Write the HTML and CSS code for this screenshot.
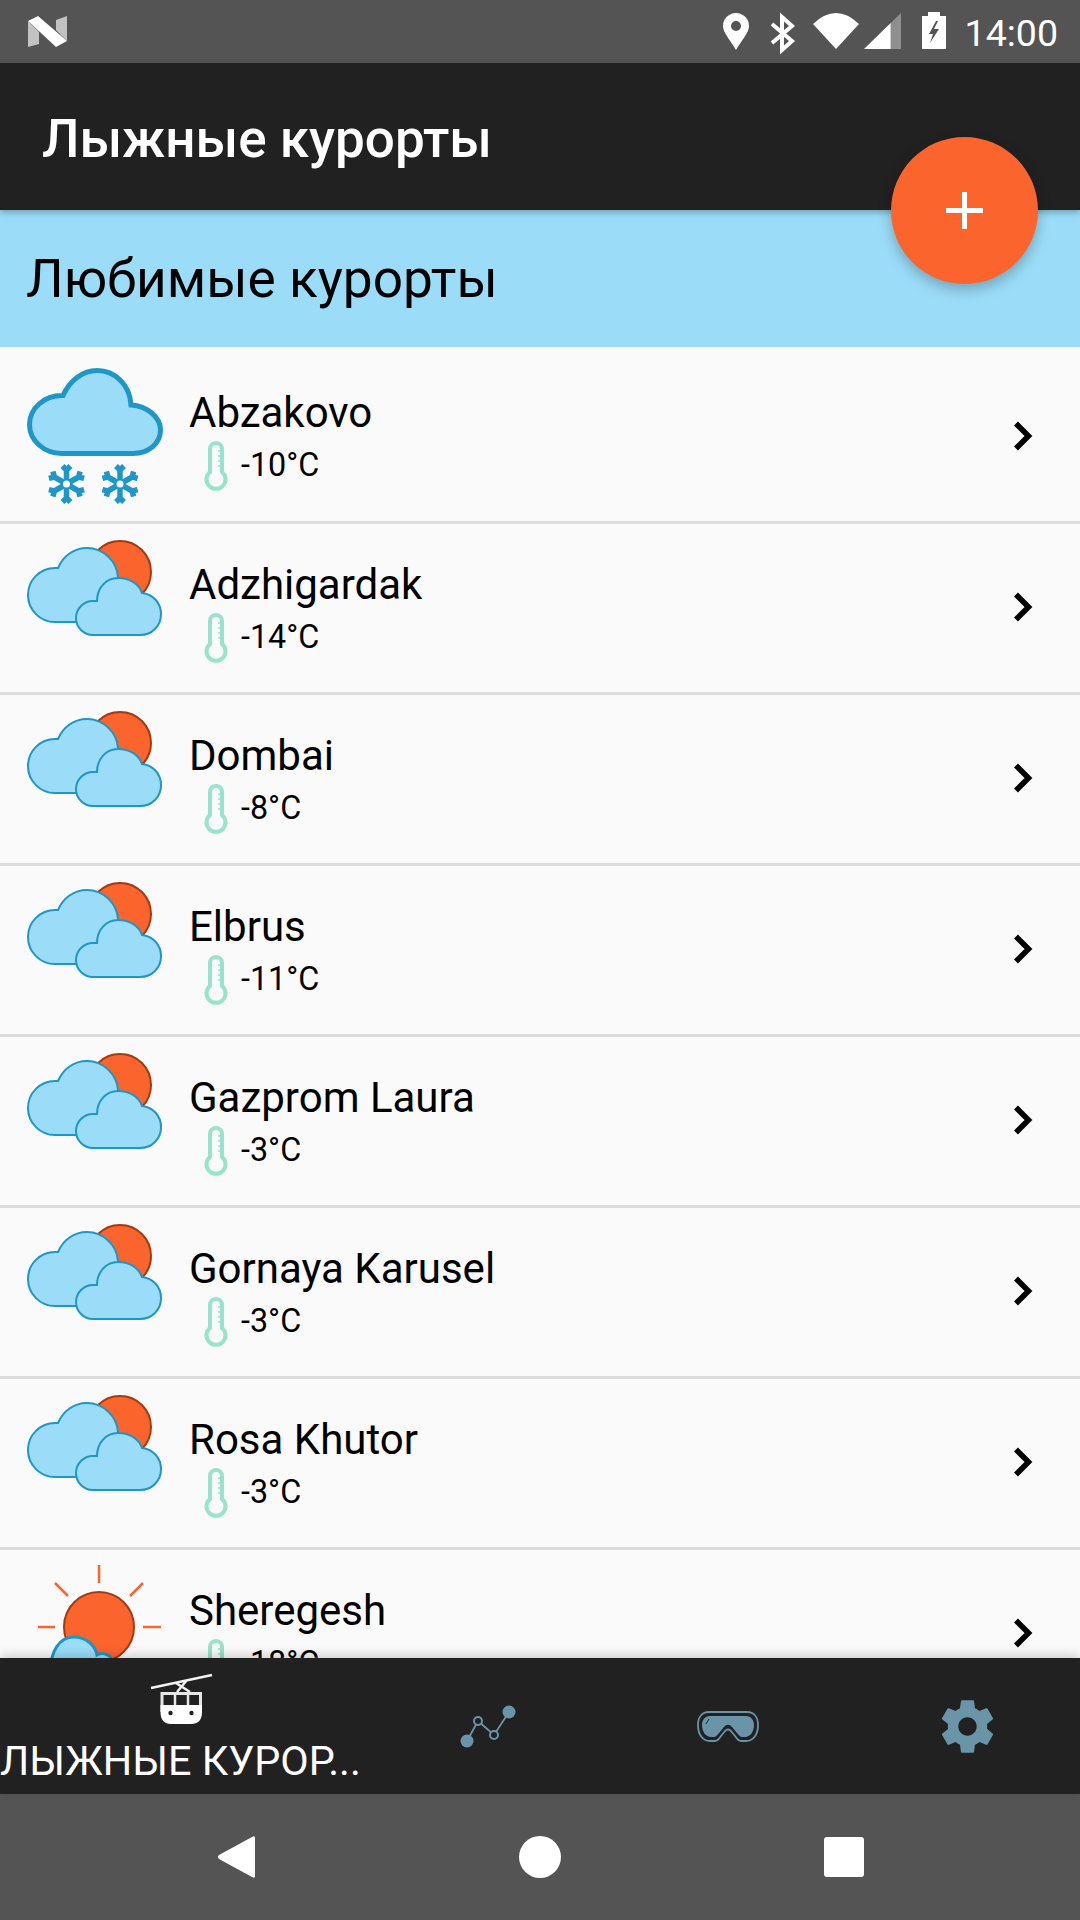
FILE: index.html
```html
<!DOCTYPE html>
<html lang="ru">
<head>
<meta charset="utf-8">
<title>Лыжные курорты</title>
<link rel="stylesheet" href="styles.css">
</head>
<body>
<svg class="defs" width="0" height="0" aria-hidden="true">
  <defs>
    <g id="flake">
      <g id="arm">
        <path d="M0-15V15M-4-18L0-14L4-18M-4 18L0 14L4 18"/>
      </g>
      <use href="#arm" transform="rotate(60)"/>
      <use href="#arm" transform="rotate(120)"/>
    </g>
    <symbol id="cloudy" viewBox="0 0 165 168">
      <circle class="sun" cx="120" cy="48" r="31"/>
      <path class="cloud" d="M55 98A27 27 0 0 1 55 44H58C63 32 74 24 87 24C103 24 117 37 118 53V98Z"/>
      <path class="cloud" d="M93 111A17 17 0 0 1 93 77H97C97 64 106 54 118 54C130 54 139 60 142 69C153 70 161 79 161 90C161 102 152 111 140 111Z"/>
    </symbol>
    <symbol id="thermo" viewBox="0 0 52 52">
      <path class="thermo-line" d="M21 33V10A6 6 0 0 1 33 10V33A9.500 9.500 0 1 1 21 33Z"/>
      <path class="thermo-tick" d="M29 12H33M29 17H33M29 22H33M29 27H33"/>
    </symbol>
    <symbol id="chevron" viewBox="0 0 30 40">
      <path d="M5 7.500L17.500 20L5 32.500" class="chevron-line"/>
    </symbol>
  </defs>
</svg>
<div class="screen">
  <header class="status">
    <svg class="n-logo" viewBox="28 16 39 31">
      <path class="n-side" d="M28 21L39 32V44L28 47ZM56 20L67 16V41L56 30Z"/>
      <path class="n-main" d="M28 21L38 16L67 41L56 47Z"/>
    </svg>
    <div class="status-right">
      <svg class="status-icons" viewBox="720 0 230 63">
        <path class="s-fill" fill-rule="evenodd" d="M736 50C731 41 723 33 723 26A13 13 0 0 1 749 26C749 33 741 41 736 50ZM736 21A5 5 0 1 0 736 31A5 5 0 1 0 736 21Z"/>
        <path class="s-line" d="M772 24L792 41L782 50V17L792 26L772 43"/>
        <path class="s-fill" d="M836 49L813 24Q836 2 859 24Z"/>
        <path class="s-fill" d="M864 49H890.700V23Z"/>
        <path class="s-dim" d="M890.700 49H901V13L890.700 23Z"/>
        <path class="s-fill" d="M928 16V12H940V16H946V49H922V16Z"/>
        <path class="s-cut" d="M936 21L929 34H933L930 43L939 29H934L938 21Z"/>
      </svg>
      <span class="clock">14:00</span>
    </div>
  </header>

  <div class="appbar"><h1 class="app-title">Лыжные курорты</h1></div>
  <div class="section-head"><h2 class="section-title">Любимые курорты</h2></div>

  <main class="list">
    <div class="row row-first">
      <svg class="weather weather-snow" viewBox="0 0 165 174">
        <path class="cloud-thick" d="M62 106.500A32.500 29 0 0 1 62 48.500H63C70 33 83 23.500 97 23.500C115 23.500 130 38 131 58C147 59 160.500 70 160.500 83C160.500 96 149 106.500 133 106.500Z"/>
        <use class="flake" href="#flake" x="66.500" y="137"/>
        <use class="flake" href="#flake" x="120" y="137"/>
        <circle class="flake-eye" cx="66.500" cy="137" r="3.500"/>
        <circle class="flake-eye" cx="120" cy="137" r="3.500"/>
      </svg>
      <div class="info">
        <div class="name">Abzakovo</div>
        <div class="temp"><svg class="thermo"><use href="#thermo"/></svg><span>-10°C</span></div>
      </div>
      <svg class="chevron"><use href="#chevron"/></svg>
    </div>
    <div class="row">
      <svg class="weather"><use href="#cloudy"/></svg>
      <div class="info"><div class="name">Adzhigardak</div><div class="temp"><svg class="thermo"><use href="#thermo"/></svg><span>-14°C</span></div></div>
      <svg class="chevron"><use href="#chevron"/></svg>
    </div>
    <div class="row">
      <svg class="weather"><use href="#cloudy"/></svg>
      <div class="info"><div class="name">Dombai</div><div class="temp"><svg class="thermo"><use href="#thermo"/></svg><span>-8°C</span></div></div>
      <svg class="chevron"><use href="#chevron"/></svg>
    </div>
    <div class="row">
      <svg class="weather"><use href="#cloudy"/></svg>
      <div class="info"><div class="name">Elbrus</div><div class="temp"><svg class="thermo"><use href="#thermo"/></svg><span>-11°C</span></div></div>
      <svg class="chevron"><use href="#chevron"/></svg>
    </div>
    <div class="row">
      <svg class="weather"><use href="#cloudy"/></svg>
      <div class="info"><div class="name">Gazprom Laura</div><div class="temp"><svg class="thermo"><use href="#thermo"/></svg><span>-3°C</span></div></div>
      <svg class="chevron"><use href="#chevron"/></svg>
    </div>
    <div class="row">
      <svg class="weather"><use href="#cloudy"/></svg>
      <div class="info"><div class="name">Gornaya Karusel</div><div class="temp"><svg class="thermo"><use href="#thermo"/></svg><span>-3°C</span></div></div>
      <svg class="chevron"><use href="#chevron"/></svg>
    </div>
    <div class="row">
      <svg class="weather"><use href="#cloudy"/></svg>
      <div class="info"><div class="name">Rosa Khutor</div><div class="temp"><svg class="thermo"><use href="#thermo"/></svg><span>-3°C</span></div></div>
      <svg class="chevron"><use href="#chevron"/></svg>
    </div>
    <div class="row">
      <svg class="weather" viewBox="0 0 165 168">
        <path class="ray" d="M99 15V33M55 33L68 46M143 33L130 46M38 77H55M143 77H161"/>
        <circle class="sun" cx="99" cy="77" r="35"/>
        <path class="cloud-mid" d="M50 125C50 100 60 87 74 87C86 87 95 95 97 105C103 102 110 104 113 111V140H50Z"/>
      </svg>
      <div class="info"><div class="name">Sheregesh</div><div class="temp"><svg class="thermo"><use href="#thermo"/></svg><span>-18°C</span></div></div>
      <svg class="chevron"><use href="#chevron"/></svg>
    </div>
  </main>

  <nav class="tabs">
    <div class="tab tab-active">
      <svg class="gondola" viewBox="150 1672 63 54">
        <path class="g-line" d="M151 1688L212 1675M176 1683L190 1692M187 1680L177 1692"/>
        <path class="g-frame" d="M162 1712V1693.500H200.500V1712"/>
        <path class="g-thin" d="M175 1694V1706M188 1694V1706"/>
        <path class="g-body" d="M160.500 1705H202V1712Q202 1724 191 1724H171Q160.500 1724 160.500 1712Z"/>
        <circle class="g-dot" cx="170.500" cy="1713" r="2.200"/>
        <circle class="g-dot" cx="191.500" cy="1713" r="2.200"/>
      </svg>
      <span class="tab-label">ЛЫЖНЫЕ КУРОР...</span>
    </div>
    <div class="tab">
      <svg class="tab-icon" viewBox="0 0 63 63">
        <path class="t-line" d="M11 46L22 26L38 40L53 17"/>
        <circle class="t-fill" cx="11" cy="46" r="6.500"/>
        <circle class="t-open" cx="22" cy="26" r="4"/>
        <circle class="t-open" cx="38" cy="40" r="4"/>
        <circle class="t-fill" cx="53" cy="17" r="6.500"/>
      </svg>
    </div>
    <div class="tab">
      <svg class="tab-icon" viewBox="0 0 63 63">
        <path class="t-line" d="M13 17H51C58 17 62 22 62 30C62 40 57 46 50 46H45C42 46 41 44 39 41L35 36C33 34 31 34 29 36L25 41C23 44 22 46 19 46H14C7 46 2 40 2 30C2 22 6 17 13 17Z"/>
        <path class="t-fill" d="M14 21H50C55 21 58 25 58 30C58 37 54 42 49 42H46C44 42 43 40 41 38L36 32C33 29 31 29 28 32L23 38C21 40 20 42 18 42H15C10 42 6 37 6 30C6 25 9 21 14 21Z"/>
        <path class="t-glint" d="M10 29L13 24"/>
      </svg>
    </div>
    <div class="tab">
      <svg class="tab-icon" viewBox="0 0 24 24">
        <path class="t-fill" d="M19.430 12.980c.04-.32.07-.64.07-.98s-.03-.66-.07-.98l2.110-1.650c.19-.15.24-.42.12-.64l-2-3.460c-.12-.22-.39-.3-.61-.22l-2.490 1c-.52-.4-1.080-.73-1.690-.98l-.38-2.650C14.460 2.180 14.250 2 14 2h-4c-.25 0-.46.18-.49.42l-.38 2.650c-.61.25-1.170.59-1.690.98l-2.490-1c-.23-.09-.49 0-.61.22l-2 3.460c-.13.22-.07.49.12.64l2.110 1.650c-.04.32-.07.65-.07.98s.03.66.07.98l-2.110 1.650c-.19.15-.24.42-.12.64l2 3.460c.12.22.39.3.61.22l2.490-1c.52.4 1.080.73 1.690.98l.38 2.650c.03.24.24.42.49.42h4c.25 0 .46-.18.49-.42l.38-2.650c.61-.25 1.170-.59 1.690-.98l2.490 1c.23.09.49 0 .61-.22l2-3.460c.12-.22.07-.49-.12-.64l-2.010-1.650zM12 15.500c-1.930 0-3.500-1.570-3.500-3.500s1.570-3.500 3.500-3.500 3.500 1.570 3.500 3.500-1.570 3.500-3.500 3.500z"/>
      </svg>
    </div>
  </nav>

  <footer class="sysnav">
    <svg class="nav-back" viewBox="0 0 38 42"><path d="M38 2V40Q38 43 35 41L2 23Q0 21 2 19L35 1Q38-1 38 2Z"/></svg>
    <span class="nav-home"></span>
    <span class="nav-recent"></span>
  </footer>

  <button class="fab" type="button" aria-label="Добавить"><span class="fab-plus"></span></button>
</div>
</body>
</html>
```
FILE: styles.css
```css
* { box-sizing: border-box; }
html, body { margin: 0; padding: 0; }
body { font-family: Roboto, "Noto Sans", sans-serif; background: #fafafa; }
.defs { position: absolute; }

.screen {
  position: relative;
  width: 1080px;
  height: 1920px;
  display: flex;
  flex-direction: column;
  overflow: hidden;
}

/* status bar */
.status {
  flex: 0 0 63px;
  background: #545454;
  display: flex;
  align-items: center;
  justify-content: space-between;
  padding: 0 22px 0 28px;
}
.n-logo { width: 39px; height: 31px; margin-top: -1px; }
.n-main { fill: #fff; }
.n-side { fill: #c2c2c2; }
.status-right { display: flex; align-items: center; gap: 15px; }
.status-icons { width: 230px; height: 63px; }
.s-fill { fill: #fff; }
.s-dim { fill: #fff; opacity: .35; }
.s-cut { fill: #545454; }
.s-line { fill: none; stroke: #fff; stroke-width: 4; }
.clock { color: #fff; font-size: 37.500px; line-height: 60px; padding-top: 2px; }

/* app bar */
.appbar {
  flex: 0 0 147px;
  background: #212121;
  display: flex;
  align-items: center;
  padding: 0 0 0 42px;
  box-shadow: 0 3px 6px rgba(0, 0, 0, .25);
  z-index: 2;
}
.app-title {
  margin: 4px 0 0;
  color: #fff;
  font-size: 53px;
  font-weight: 500;
}

/* section head */
.section-head {
  flex: 0 0 137px;
  background: #9bddf9;
  display: flex;
  align-items: center;
  padding-left: 26px;
}
.section-title {
  margin: 0;
  color: #000;
  font-size: 53.200px;
  font-weight: 400;
}

/* list */
.list { flex: 1 1 0; min-height: 0; overflow: hidden; background: #fafafa; }
.row {
  display: flex;
  align-items: center;
  border-bottom: 3px solid #dcdcdc;
  padding-right: 39px;
}
.weather { flex: 0 0 165px; width: 165px; height: 168px; margin-right: 24px; align-self: flex-start; }
.weather-snow { height: 174px; }
.info { flex: 1 1 auto; min-width: 0; padding-top: 4px; }
.row-first .info { padding-top: 8px; }
.name { font-size: 42px; line-height: 52px; color: #000; }
.temp {
  display: flex;
  align-items: center;
  height: 48px;
  margin-top: 2px;
  font-size: 32.300px;
  color: #000;
}
.thermo { width: 52px; height: 52px; flex: none; }
.thermo-line { fill: none; stroke: #97e3cb; stroke-width: 4; }
.thermo-tick { fill: none; stroke: #97e3cb; stroke-width: 1.500; }
.chevron { width: 30px; height: 40px; flex: none; margin-top: -2px; }
.row-first .chevron { margin-top: 4px; }
.chevron-line { fill: none; stroke: #000; stroke-width: 5.500; }

.sun { fill: #fc642d; stroke: #a33a12; stroke-width: 2; }
.cloud { fill: #9bddf9; stroke: #1e96c8; stroke-width: 2; }
.cloud-mid { fill: #9bddf9; stroke: #1e96c8; stroke-width: 3; }
.cloud-thick { fill: #9bddf9; stroke: #1e96c8; stroke-width: 5; }
.flake { fill: none; stroke: #1e96c8; stroke-width: 5.500; }
.flake-eye { fill: #fafafa; }
.ray { fill: none; stroke: #fc642d; stroke-width: 2.500; }

/* bottom tabs */
.tabs {
  flex: 0 0 136px;
  background: #212121;
  display: grid;
  grid-template-columns: 367px 240px 240px 240px;
  box-shadow: 0 -3px 10px rgba(0, 0, 0, .18);
  z-index: 2;
}
.tab { display: flex; flex-direction: column; align-items: center; justify-content: center; overflow: hidden; }
.tab-active { align-items: flex-start; justify-content: flex-start; padding-top: 14px; }
.gondola { width: 63px; height: 54px; margin-left: 150px; }
.tab-label { color: #fff; font-size: 41.300px; line-height: 50px; margin-top: 10px; white-space: nowrap; }
.tab-icon { width: 63px; height: 63px; }
.g-line { fill: none; stroke: #f2f2f2; stroke-width: 2.500; }
.g-frame { fill: none; stroke: #e6e6e6; stroke-width: 3; }
.g-thin { fill: none; stroke: #e6e6e6; stroke-width: 2.500; }
.g-body { fill: #fff; }
.g-dot { fill: #212121; }
.t-line { fill: none; stroke: #6a95a9; stroke-width: 1.800; }
.t-fill { fill: #6a95a9; }
.t-open { fill: #212121; stroke: #6a95a9; stroke-width: 2; }
.t-glint { fill: none; stroke: #212121; stroke-width: 1; }

/* system nav */
.sysnav {
  flex: 0 0 126px;
  background: #545454;
  display: flex;
  align-items: center;
  padding-left: 217px;
}
.nav-back { width: 38px; height: 42px; fill: #fff; }
.nav-home { width: 42px; height: 42px; border-radius: 50%; background: #fff; margin-left: 264px; }
.nav-recent { width: 40px; height: 40px; border-radius: 3px; background: #fff; margin-left: 263px; }

/* floating button */
.fab {
  position: absolute;
  left: 891px;
  top: 137px;
  width: 147px;
  height: 147px;
  border: 0;
  padding: 0;
  border-radius: 50%;
  background: #fc642d;
  box-shadow: 0 6px 14px rgba(0, 0, 0, .25);
  z-index: 3;
}
.fab-plus {
  position: absolute;
  left: 55px;
  top: 55px;
  width: 37px;
  height: 37px;
  background:
    linear-gradient(#fff, #fff) center / 100% 5px no-repeat,
    linear-gradient(#fff, #fff) center / 5px 100% no-repeat;
}
```
